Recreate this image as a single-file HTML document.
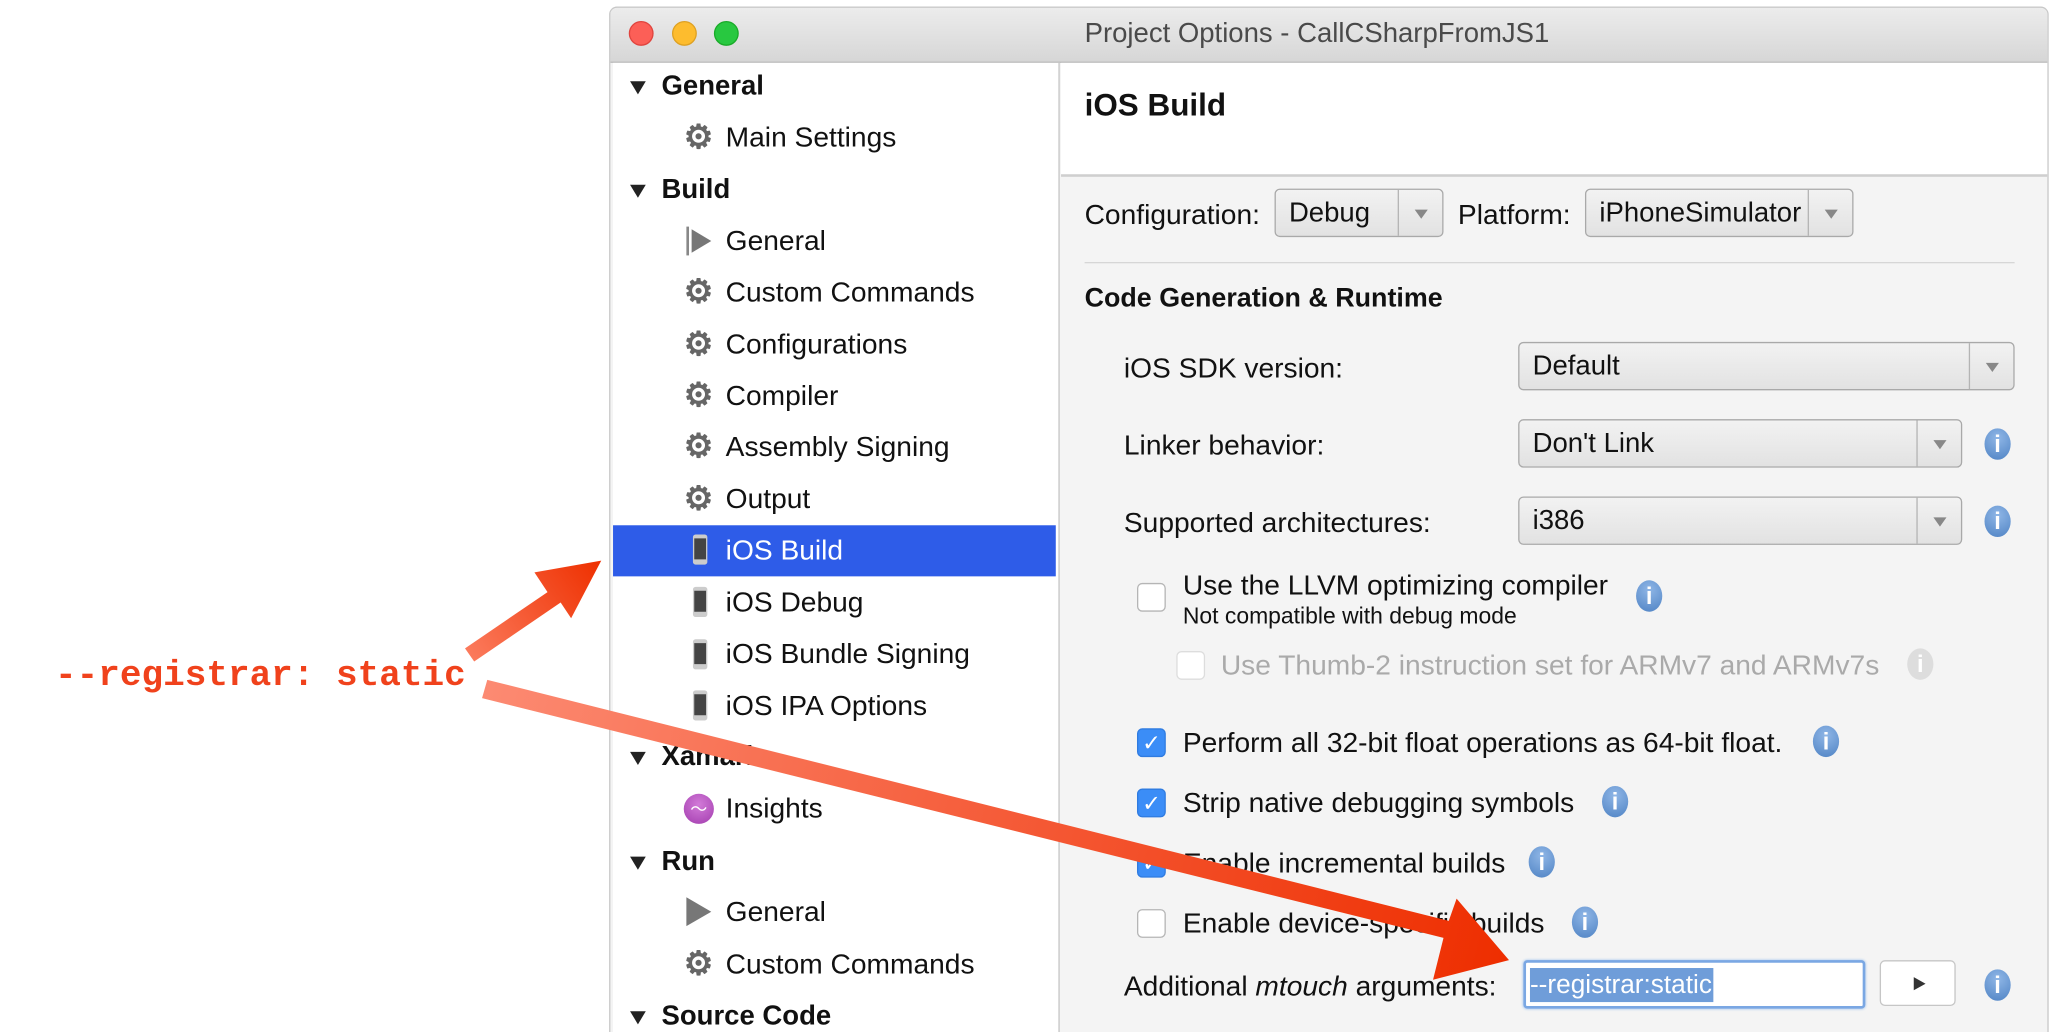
<!DOCTYPE html>
<html><head><meta charset="utf-8">
<style>
html,body{margin:0;padding:0;background:#fff;overflow:hidden;}
body{width:2050px;height:1032px;position:relative;}
#w{position:absolute;left:0;top:0;width:1565px;height:788px;transform:scale(1.3099);transform-origin:0 0;font-family:"Liberation Sans",sans-serif;color:#111;}
.a{position:absolute;white-space:nowrap;}
.win{position:absolute;left:465px;top:5px;width:1097px;height:790px;border:1px solid #c8c8c8;border-radius:6px 6px 0 0;overflow:hidden;background:#f4f4f4;}
.tb{position:absolute;left:0;top:0;right:0;height:41px;background:linear-gradient(#ececec,#d6d6d6);border-bottom:1px solid #b9b9b9;}
.tl{position:absolute;top:10px;width:17px;height:17px;border-radius:50%;}
.side{position:absolute;left:2px;top:42px;width:340px;height:760px;background:#fff;border-right:1px solid #c4c4c4;}
.h{font-weight:bold;font-size:21px;}
.it{font-size:21.5px;}
.tri{position:absolute;width:0;height:0;border-left:6px solid transparent;border-right:6px solid transparent;border-top:10px solid #222;}
.gear{position:absolute;font-size:25px;color:#666;line-height:1;font-weight:bold;}
.ph{position:absolute;width:11px;height:23px;background:#444;border:1.5px solid #ccc;border-radius:2px;box-sizing:border-box;border-top-width:3px;border-bottom-width:4px;}
.combo{position:absolute;height:37px;border:1px solid #a9a9a9;border-radius:4px;background:linear-gradient(#f2f2f2,#e2e2e2);box-sizing:border-box;font-size:21px;line-height:35px;padding-left:10px;}
.combo .ar{position:absolute;right:0;top:0;bottom:0;width:33px;border-left:1px solid #b4b4b4;}
.combo .ar:after{content:"";position:absolute;left:12px;top:15px;border-left:5px solid transparent;border-right:5px solid transparent;border-top:7px solid #888;}
.info{position:absolute;width:20px;height:24px;border-radius:50%;background:radial-gradient(circle at 50% 30%,#8fb6e6,#4f83c4);color:#fff;font-weight:bold;font-size:18px;text-align:center;line-height:24px;}
.cb{position:absolute;width:22px;height:22px;border:1px solid #b5b5b5;border-radius:4px;background:#fff;box-sizing:border-box;}
.cb.on{background:#3b8df7;border-color:#2f7be0;color:#fff;font-size:17px;text-align:center;line-height:22px;}
.lbl{font-size:21.5px;}
.ck{font-size:21.5px;}
</style></head><body><div id="w">
<div class="win">
 <div class="tb">
  <div class="tl" style="left:14px;background:#fc5f57;border:0.5px solid #e0443e"></div>
  <div class="tl" style="left:47px;background:#fdbc2e;border:0.5px solid #dea123"></div>
  <div class="tl" style="left:79px;background:#28c840;border:0.5px solid #1aab29"></div>
  <div class="a" style="left:362px;top:8px;font-size:21px;color:#4a4a4a">Project Options - CallCSharpFromJS1</div>
 </div>
 <div class="side">
  <div style="position:absolute;left:0;top:353px;width:338px;height:39px;background:#2e5ce8"></div>
 </div>
 <div style="position:absolute;left:344px;top:42px;right:0;height:85px;background:#fff;border-bottom:2px solid #cfcfcf"></div>
</div>

<div class="tri" style="left:481px;top:62px"></div><div class="a h" style="left:505px;top:54px">General</div>
<div class="gear" style="left:522px;top:93px">⚙</div><div class="a it" style="left:554px;top:93px">Main Settings</div>
<div class="tri" style="left:481px;top:141px"></div><div class="a h" style="left:505px;top:133px">Build</div>
<div class="a" style="left:524px;top:173px;width:2px;height:22px;background:#888"></div>
<div class="a" style="left:528px;top:175px;width:0;height:0;border-top:9px solid transparent;border-bottom:9px solid transparent;border-left:15px solid #777"></div>
<div class="a it" style="left:554px;top:172px">General</div>
<div class="gear" style="left:522px;top:211px">⚙</div><div class="a it" style="left:554px;top:211px">Custom Commands</div>
<div class="gear" style="left:522px;top:251px">⚙</div><div class="a it" style="left:554px;top:251px">Configurations</div>
<div class="gear" style="left:522px;top:290px">⚙</div><div class="a it" style="left:554px;top:290px">Compiler</div>
<div class="gear" style="left:522px;top:329px">⚙</div><div class="a it" style="left:554px;top:329px">Assembly Signing</div>
<div class="gear" style="left:522px;top:369px">⚙</div><div class="a it" style="left:554px;top:369px">Output</div>
<div class="ph" style="left:529px;top:408px"></div><div class="a it" style="left:554px;top:408px;color:#fff">iOS Build</div>
<div class="ph" style="left:529px;top:448px"></div><div class="a it" style="left:554px;top:448px">iOS Debug</div>
<div class="ph" style="left:529px;top:488px"></div><div class="a it" style="left:554px;top:487px">iOS Bundle Signing</div>
<div class="ph" style="left:529px;top:527px"></div><div class="a it" style="left:554px;top:527px">iOS IPA Options</div>
<div class="tri" style="left:481px;top:574px"></div><div class="a h" style="left:505px;top:566px">Xamarin</div>
<div class="a" style="left:522px;top:606px;width:23px;height:23px;border-radius:50%;background:radial-gradient(circle at 50% 35%,#d27ad8,#a23cae);color:#fff;font-size:13px;text-align:center;line-height:23px">〜</div>
<div class="a it" style="left:554px;top:605px">Insights</div>
<div class="tri" style="left:481px;top:654px"></div><div class="a h" style="left:505px;top:646px">Run</div>
<div class="a" style="left:524px;top:685px;width:0;height:0;border-top:11px solid transparent;border-bottom:11px solid transparent;border-left:19px solid #777"></div>
<div class="a it" style="left:554px;top:684px">General</div>
<div class="gear" style="left:522px;top:724px">⚙</div><div class="a it" style="left:554px;top:724px">Custom Commands</div>
<div class="tri" style="left:481px;top:772px"></div><div class="a h" style="left:505px;top:764px">Source Code</div>

<div class="a" style="left:828px;top:67px;font-size:24px;font-weight:bold">iOS Build</div>
<div class="a lbl" style="left:828px;top:152px">Configuration:</div>
<div class="combo" style="left:973px;top:144px;width:129px">Debug<div class="ar"></div></div>
<div class="a lbl" style="left:1113px;top:152px">Platform:</div>
<div class="combo" style="left:1210px;top:144px;width:205px">iPhoneSimulator<div class="ar"></div></div>
<div class="a" style="left:828px;top:200px;width:710px;height:1px;background:#d6d6d6"></div>
<div class="a" style="left:828px;top:216px;font-size:20.5px;font-weight:bold">Code Generation &amp; Runtime</div>
<div class="a lbl" style="left:858px;top:269px">iOS SDK version:</div>
<div class="combo" style="left:1159px;top:261px;width:379px">Default<div class="ar"></div></div>
<div class="a lbl" style="left:858px;top:328px">Linker behavior:</div>
<div class="combo" style="left:1159px;top:320px;width:339px">Don't Link<div class="ar"></div></div>
<div class="info" style="left:1515px;top:327px">i</div>
<div class="a lbl" style="left:858px;top:387px">Supported architectures:</div>
<div class="combo" style="left:1159px;top:379px;width:339px">i386<div class="ar"></div></div>
<div class="info" style="left:1515px;top:386px">i</div>

<div class="cb" style="left:868px;top:445px"></div>
<div class="a ck" style="left:903px;top:435px">Use the LLVM optimizing compiler</div>
<div class="a" style="left:903px;top:460px;font-size:17.5px">Not compatible with debug mode</div>
<div class="info" style="left:1249px;top:443px">i</div>
<div class="cb" style="left:898px;top:497px;border-color:#ddd"></div>
<div class="a ck" style="left:932px;top:496px;color:#aaa">Use Thumb-2 instruction set for ARMv7 and ARMv7s</div>
<div class="info" style="left:1456px;top:495px;background:#ddd">i</div>

<div class="cb on" style="left:868px;top:556px">✓</div>
<div class="a ck" style="left:903px;top:555px">Perform all 32-bit float operations as 64-bit float.</div>
<div class="info" style="left:1384px;top:554px">i</div>
<div class="cb on" style="left:868px;top:602px">✓</div>
<div class="a ck" style="left:903px;top:601px">Strip native debugging symbols</div>
<div class="info" style="left:1223px;top:600px">i</div>
<div class="cb on" style="left:868px;top:648px">✓</div>
<div class="a ck" style="left:903px;top:647px">Enable incremental builds</div>
<div class="info" style="left:1167px;top:646px">i</div>
<div class="cb" style="left:868px;top:694px"></div>
<div class="a ck" style="left:903px;top:693px">Enable device-specific builds</div>
<div class="info" style="left:1200px;top:692px">i</div>

<div class="a lbl" style="left:858px;top:741px">Additional <i>mtouch</i> arguments:</div>
<div class="a" style="left:1163px;top:733px;width:261px;height:37px;box-sizing:border-box;border:2px solid #7aa7e3;border-radius:3px;background:#fff;box-shadow:0 0 2px #9cc0ee"></div>
<div class="a" style="left:1168px;top:739px;height:26px;background:#6f9dd9;color:#fff;font-size:20px;line-height:26px;padding-right:1px">--registrar:static</div>
<div class="a" style="left:1435px;top:733px;width:58px;height:35px;box-sizing:border-box;border:1px solid #c6c6c6;border-radius:4px;background:#fff"></div>
<div class="a" style="left:1461px;top:746px;width:0;height:0;border-top:5px solid transparent;border-bottom:5px solid transparent;border-left:9px solid #333"></div>
<div class="info" style="left:1515px;top:740px">i</div>

<div class="a" style="left:42px;top:501px;font-family:'Liberation Mono',monospace;font-weight:bold;font-size:27.5px;color:#f0421c">--registrar: static</div>
<svg class="a" style="left:0;top:0" width="1565" height="788">
<defs>
<linearGradient id="g1" x1="358" y1="500" x2="458" y2="428" gradientUnits="userSpaceOnUse"><stop offset="0" stop-color="#fb7a5c"/><stop offset="1" stop-color="#ee3000"/></linearGradient>
<linearGradient id="g2" x1="372" y1="525" x2="1150" y2="730" gradientUnits="userSpaceOnUse"><stop offset="0" stop-color="#fc8a72"/><stop offset="1" stop-color="#ee2e00"/></linearGradient>
</defs>
<polygon fill="url(#g1)" points="355,495 418,452 408,437 459,428 436,472 428,460 362,505"/>
<polygon fill="url(#g2)" points="372,519 1106,703 1112,686 1152,733 1094,748 1102,716 368,533"/>
</svg>
</div></body></html>
